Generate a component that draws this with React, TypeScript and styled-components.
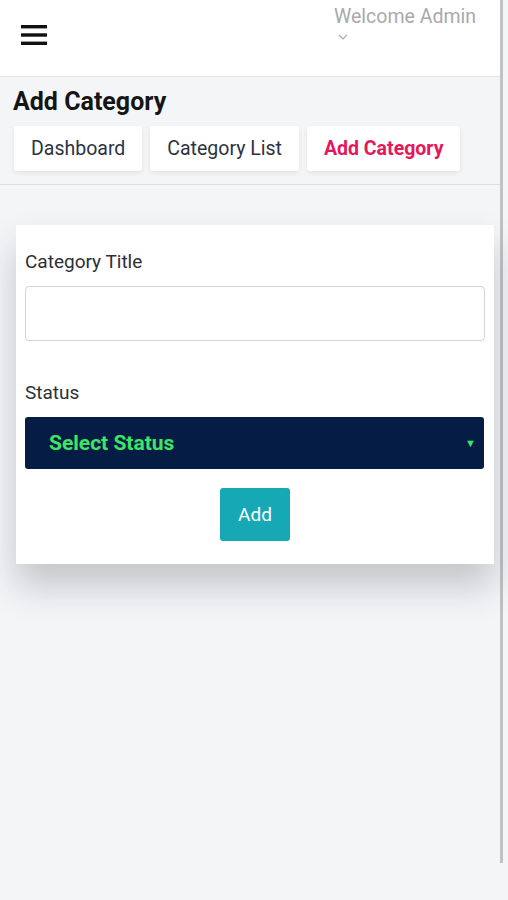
import React from 'react';
import styled, { createGlobalStyle } from 'styled-components';

const GlobalStyle = createGlobalStyle`
  html, body {
    margin: 0;
    padding: 0;
    background: #f4f5f7;
    font-family: Roboto, "Liberation Sans", Arial, sans-serif;
  }
  * {
    box-sizing: border-box;
  }
`;

const Shell = styled.div`
  width: 503px;
  min-height: 863px;
  border-right: 3px solid #c2c2c4;
  background: #f4f5f7;
`;

const Header = styled.header`
  height: 77px;
  background: #ffffff;
  border-bottom: 1px solid #e4e6ea;
  display: flex;
  justify-content: space-between;
  align-items: flex-start;
  padding: 0 24px 0 21px;
`;

const MenuButton = styled.button`
  margin-top: 24px;
  padding: 0;
  border: none;
  background: none;
  display: flex;
  cursor: pointer;
`;

const UserBox = styled.div`
  margin-top: 5px;
  display: flex;
  flex-direction: column;
  align-items: flex-start;
  color: #a9a9ab;
  font-size: 19.5px;
  line-height: 24px;
`;

const Chevron = styled.span`
  margin: 4px 0 0 4px;
  display: flex;
`;

const PageTitle = styled.h1`
  margin: 10px 0 0 13px;
  font-size: 25px;
  font-weight: 700;
  color: #151515;
  line-height: 30px;
`;

const TabRow = styled.nav`
  display: flex;
  gap: 8px;
  padding: 9px 0 13px 14px;
  border-bottom: 1.5px solid #dcdee2;
`;

const Tab = styled.a<{ $active?: boolean }>`
  display: flex;
  align-items: center;
  height: 45px;
  padding: 0 17px;
  background: #ffffff;
  border-radius: 3px;
  box-shadow: 0 2px 5px rgba(0, 0, 0, 0.08);
  font-size: 19.5px;
  text-decoration: none;
  color: ${({ $active }) => ($active ? '#e5175b' : '#2c3242')};
  font-weight: ${({ $active }) => ($active ? 700 : 400)};
  cursor: pointer;
`;

const Card = styled.form`
  margin: 40px 0 0 16px;
  width: 478px;
  background: #ffffff;
  padding: 25px 9px 23px 9px;
  display: flex;
  flex-direction: column;
  box-shadow: 0 22px 34px rgba(40, 45, 60, 0.24);
`;

const Label = styled.label`
  font-size: 19px;
  color: #2c2f36;
  line-height: 24px;
  margin-bottom: 12px;
`;

const TextInput = styled.input`
  width: 460px;
  height: 55px;
  border: 1.5px solid #d3d4d6;
  border-radius: 4px;
  background: #fff;
  margin-bottom: 40px;
  font-size: 17px;
  padding: 0 12px;
`;

const SelectBox = styled.div`
  width: 459px;
  height: 52px;
  background: #051d44;
  border-radius: 3px;
  display: flex;
  align-items: center;
  justify-content: space-between;
  padding: 0 8px 0 24px;
  color: #3de465;
  font-size: 21px;
  font-weight: 700;
`;

const Caret = styled.span`
  font-size: 11px;
  color: #3de465;
`;

const AddButton = styled.button`
  align-self: center;
  margin-top: 19px;
  width: 70px;
  height: 53px;
  border: none;
  border-radius: 3px;
  background: #17a8b6;
  color: #ffffff;
  font-family: inherit;
  font-size: 19px;
  cursor: pointer;
`;

const App: React.FC = () => {
  return (
    <>
      <GlobalStyle />
      <Shell>
        <Header>
          <MenuButton type="button">
            <svg width="26" height="22" viewBox="0 0 26 22">
              <rect x="0" y="1" width="26" height="3.4" fill="#111" />
              <rect x="0" y="9.3" width="26" height="3.4" fill="#111" />
              <rect x="0" y="17.6" width="26" height="3.4" fill="#111" />
            </svg>
          </MenuButton>
          <UserBox>
            Welcome Admin
            <Chevron>
              <svg width="10" height="8" viewBox="0 0 10 8">
                <path d="M1 2 L5 6 L9 2" fill="none" stroke="#aaa" strokeWidth="1.2" />
              </svg>
            </Chevron>
          </UserBox>
        </Header>
        <PageTitle>Add Category</PageTitle>
        <TabRow>
          <Tab>Dashboard</Tab>
          <Tab>Category List</Tab>
          <Tab $active>Add Category</Tab>
        </TabRow>
        <Card onSubmit={(e) => e.preventDefault()}>
          <Label>Category Title</Label>
          <TextInput type="text" />
          <Label>Status</Label>
          <SelectBox>
            Select Status
            <Caret>▼</Caret>
          </SelectBox>
          <AddButton type="submit">Add</AddButton>
        </Card>
      </Shell>
    </>
  );
};

export default App;
